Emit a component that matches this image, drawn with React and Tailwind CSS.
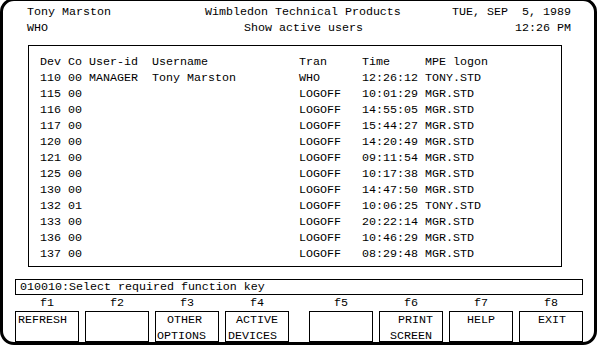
import React from 'react';

const rows = [
  ['110', '00', 'MANAGER', 'Tony Marston', 'WHO', '12:26:12', 'TONY.STD'],
  ['115', '00', '', '', 'LOGOFF', '10:01:29', 'MGR.STD'],
  ['116', '00', '', '', 'LOGOFF', '14:55:05', 'MGR.STD'],
  ['117', '00', '', '', 'LOGOFF', '15:44:27', 'MGR.STD'],
  ['120', '00', '', '', 'LOGOFF', '14:20:49', 'MGR.STD'],
  ['121', '00', '', '', 'LOGOFF', '09:11:54', 'MGR.STD'],
  ['125', '00', '', '', 'LOGOFF', '10:17:38', 'MGR.STD'],
  ['130', '00', '', '', 'LOGOFF', '14:47:50', 'MGR.STD'],
  ['132', '01', '', '', 'LOGOFF', '10:06:25', 'TONY.STD'],
  ['133', '00', '', '', 'LOGOFF', '20:22:14', 'MGR.STD'],
  ['136', '00', '', '', 'LOGOFF', '10:46:29', 'MGR.STD'],
  ['137', '00', '', '', 'LOGOFF', '08:29:48', 'MGR.STD'],
];

const header = ['Dev', 'Co', 'User-id', 'Username', 'Tran', 'Time', 'MPE logon'];

// each key: label + lines, with left padding per line
const keysLeft = [
  { key: 'f1', lines: [{ t: 'REFRESH', pl: 'pl-[2px]' }] },
  { key: 'f2', lines: [] },
  { key: 'f3', lines: [{ t: 'OTHER', pl: 'pl-[11px]' }, { t: 'OPTIONS', pl: 'pl-[1px]' }] },
  { key: 'f4', lines: [{ t: 'ACTIVE', pl: 'pl-[10px]' }, { t: 'DEVICES', pl: 'pl-[2px]' }] },
];
const keysRight = [
  { key: 'f5', lines: [] },
  { key: 'f6', lines: [{ t: 'PRINT', pl: 'pl-[18px]' }, { t: 'SCREEN', pl: 'pl-[10px]' }] },
  { key: 'f7', lines: [{ t: 'HELP', pl: 'pl-[17px]' }] },
  { key: 'f8', lines: [{ t: 'EXIT', pl: 'pl-[18px]' }] },
];

function FKey({ k }) {
  return (
    <div className="flex flex-col w-[64px]">
      <div className="h-[16px] text-center">{k.key}</div>
      <div className="h-[31px] border border-black">
        {k.lines.map((l) => (
          <div key={l.t} className={`h-[16px] whitespace-pre ${l.pl}`}>{l.t}</div>
        ))}
      </div>
    </div>
  );
}

function Row({ cells }) {
  return (
    <div className="grid grid-cols-[28px_21px_63px_147px_63px_63px_1fr] h-[16px] whitespace-pre">
      {cells.map((c, i) => (
        <div key={i}>{c}</div>
      ))}
    </div>
  );
}

export default function App() {
  return (
    <div className="w-[598px] h-[348px] overflow-hidden bg-white text-black text-[11.66px] leading-[16px] [font-family:'Liberation_Mono','Courier_New',monospace]">
      <div className="-mt-[2px] w-[597px] h-[347px] border-[3px] border-black rounded-[14px] flex flex-col pt-[3px]">
        {/* header */}
        <div className="pl-[24px] pr-[23px]">
          <div className="flex h-[16px] whitespace-pre">
            <div className="w-[178px]">Tony Marston</div>
            <div>Wimbledon Technical Products</div>
            <div className="flex-1 text-right">TUE, SEP  5, 1989</div>
          </div>
          <div className="flex h-[16px] whitespace-pre">
            <div className="w-[217px]">WHO</div>
            <div>Show active users</div>
            <div className="flex-1 text-right">12:26 PM</div>
          </div>
        </div>

        {/* table */}
        <div className="mt-[9px] ml-[25px] w-[534px] h-[222px] border border-black pt-[8px] pl-[11px]">
          <Row cells={header} />
          {rows.map((r) => (
            <Row key={r[0]} cells={r} />
          ))}
        </div>

        {/* message line */}
        <div className="mt-[12px] ml-[12px] w-[568px] h-[16px] border border-black pl-[4px] leading-[15px] whitespace-pre">
          010010:Select required function key
        </div>

        {/* function keys */}
        <div className="flex ml-[12px] w-[568px] justify-between">
          <div className="flex gap-[6px]">
            {keysLeft.map((k) => (
              <FKey key={k.key} k={k} />
            ))}
          </div>
          <div className="flex gap-[6px]">
            {keysRight.map((k) => (
              <FKey key={k.key} k={k} />
            ))}
          </div>
        </div>
      </div>
    </div>
  );
}
